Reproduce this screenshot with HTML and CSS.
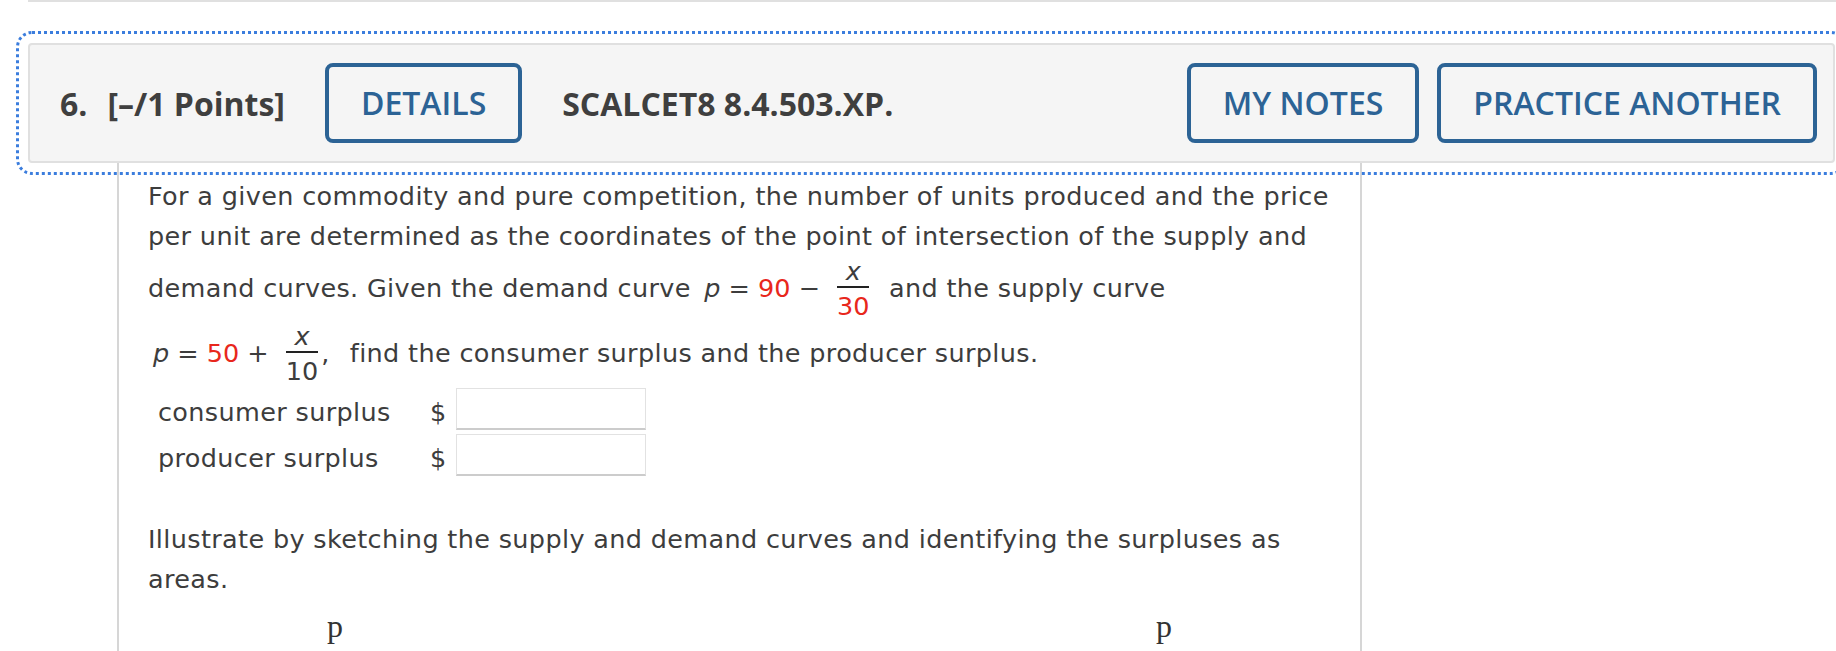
FILE: index.html
```html
<!DOCTYPE html>
<html lang="en">
<head>
<meta charset="utf-8">
<title>Question 6 – SCALCET8 8.4.503.XP.</title>
<link rel="stylesheet" href="styles.css">
</head>
<body>
<div class="prev-question"></div>
<div class="question">
  <div class="q-header">
    <span class="q-num">6.</span>
    <span class="q-points">[–/1 Points]</span>
    <button class="q-btn q-details" type="button">DETAILS</button>
    <span class="q-code">SCALCET8 8.4.503.XP.</span>
    <div class="q-actions">
      <button class="q-btn" type="button">MY NOTES</button>
      <button class="q-btn" type="button">PRACTICE ANOTHER</button>
    </div>
  </div>
  <div class="q-body">
    <p class="q-text">For a given commodity and pure competition, the number of units produced and the price per unit are determined as the coordinates of the point of intersection of the supply and demand curves. Given the demand curve <span class="math"><i>p</i> = <span class="red">90</span> − <span class="frac"><span class="num"><i>x</i></span><span class="den red">30</span></span></span> and the supply curve <span class="math"><i>p</i> = <span class="red">50</span> + <span class="frac"><span class="num"><i>x</i></span><span class="den">10</span></span><span class="punct">,</span></span> find the consumer surplus and the producer surplus.</p>
    <div class="answers">
      <span class="ans-label">consumer surplus</span>
      <span class="ans-cur">$</span>
      <input class="ans-input" type="text" aria-label="consumer surplus">
      <span class="ans-label">producer surplus</span>
      <span class="ans-cur">$</span>
      <input class="ans-input" type="text" aria-label="producer surplus">
    </div>
    <p class="q-text q-illus">Illustrate by sketching the supply and demand curves and identifying the surpluses as areas.</p>
    <div class="graphs">
      <div class="graph"><span class="axis">p</span></div>
      <div class="graph"><span class="axis">p</span></div>
    </div>
  </div>
</div>
</body>
</html>
```

FILE: styles.css
```css
html, body {
  margin: 0;
  padding: 0;
  background: #ffffff;
}

body {
  font-family: "DejaVu Sans", Verdana, sans-serif;
  color: #3d3d3d;
  overflow: hidden;
}

.prev-question {
  margin-left: 28px;
  height: 0;
  border-bottom: 2px solid #e0e0e0;
}

.question {
  margin-top: 41px;
}

.q-header {
  margin-left: 28px;
  margin-right: 1px;
  display: flex;
  align-items: center;
  padding: 18px 16px 18px 30px;
  background: #f5f5f5;
  border: 2px solid #e0e0e0;
  border-radius: 4px;
  outline: 3px dotted #3b7ddd;
  outline-offset: 9px;
  font-family: "Open Sans", "Noto Sans", sans-serif;
  font-size: 32px;
  color: #3f3f3f;
}

.q-num {
  font-weight: 700;
  margin-right: 20px;
}

.q-points {
  font-weight: 700;
  margin-right: 40px;
}

.q-code {
  font-weight: 700;
  margin-left: 40px;
}

.q-btn {
  box-sizing: border-box;
  height: 80px;
  padding: 0 32px;
  font-family: "Open Sans", "Noto Sans", sans-serif;
  font-size: 32px;
  font-weight: 600;
  line-height: 72px;
  color: #2c6395;
  background: transparent;
  border: 4px solid #2c6395;
  border-radius: 8px;
  cursor: pointer;
}

.q-actions {
  margin-left: auto;
  display: flex;
  gap: 18px;
}

.q-body {
  box-sizing: border-box;
  width: 1245px;
  margin-left: 117px;
  padding: 13px 18px 0 29px;
  border-left: 2px solid #d6d6d6;
  border-right: 2px solid #d6d6d6;
}

.q-text {
  margin: 0;
  font-size: 25.5px;
  letter-spacing: 0.35px;
  line-height: 40px;
}

.math {
  white-space: nowrap;
  margin-left: 5px;
  margin-right: 8px;
  letter-spacing: 0;
}

.punct {
  margin-right: 4px;
}

.red {
  color: #e8271c;
}

.frac {
  display: inline-flex;
  flex-direction: column;
  align-items: stretch;
  text-align: center;
  vertical-align: 17px;
  margin: 0 3px 0 9px;
}

.num {
  line-height: 30px;
  padding: 0 4px;
  border-bottom: 2px solid #222;
}

.den {
  line-height: 30px;
  padding-top: 3px;
}

.answers {
  display: grid;
  grid-template-columns: 282px 26px 190px;
  row-gap: 1px;
  align-items: start;
  margin-top: 2px;
  font-size: 25.5px;
  letter-spacing: 0.35px;
}

.ans-label {
  padding-left: 10px;
  padding-top: 3px;
  line-height: 42px;
}

.ans-cur {
  padding-top: 3px;
  line-height: 42px;
}

.ans-input {
  box-sizing: border-box;
  width: 190px;
  height: 42px;
  margin: 0;
  border: 1px solid #e2e2e2;
  border-bottom: 2px solid #cccccc;
  background: #ffffff;
  font-size: 20px;
}

.q-illus {
  margin-top: 40px;
}

.graphs {
  display: flex;
  gap: 129px;
  height: 50px;
  margin-top: 5px;
}

.graph {
  flex: 0 0 700px;
  padding-left: 179px;
  box-sizing: border-box;
}

.axis {
  font-family: "Liberation Serif", "Times New Roman", serif;
  font-size: 32px;
  line-height: 44px;
  color: #333333;
}
```
